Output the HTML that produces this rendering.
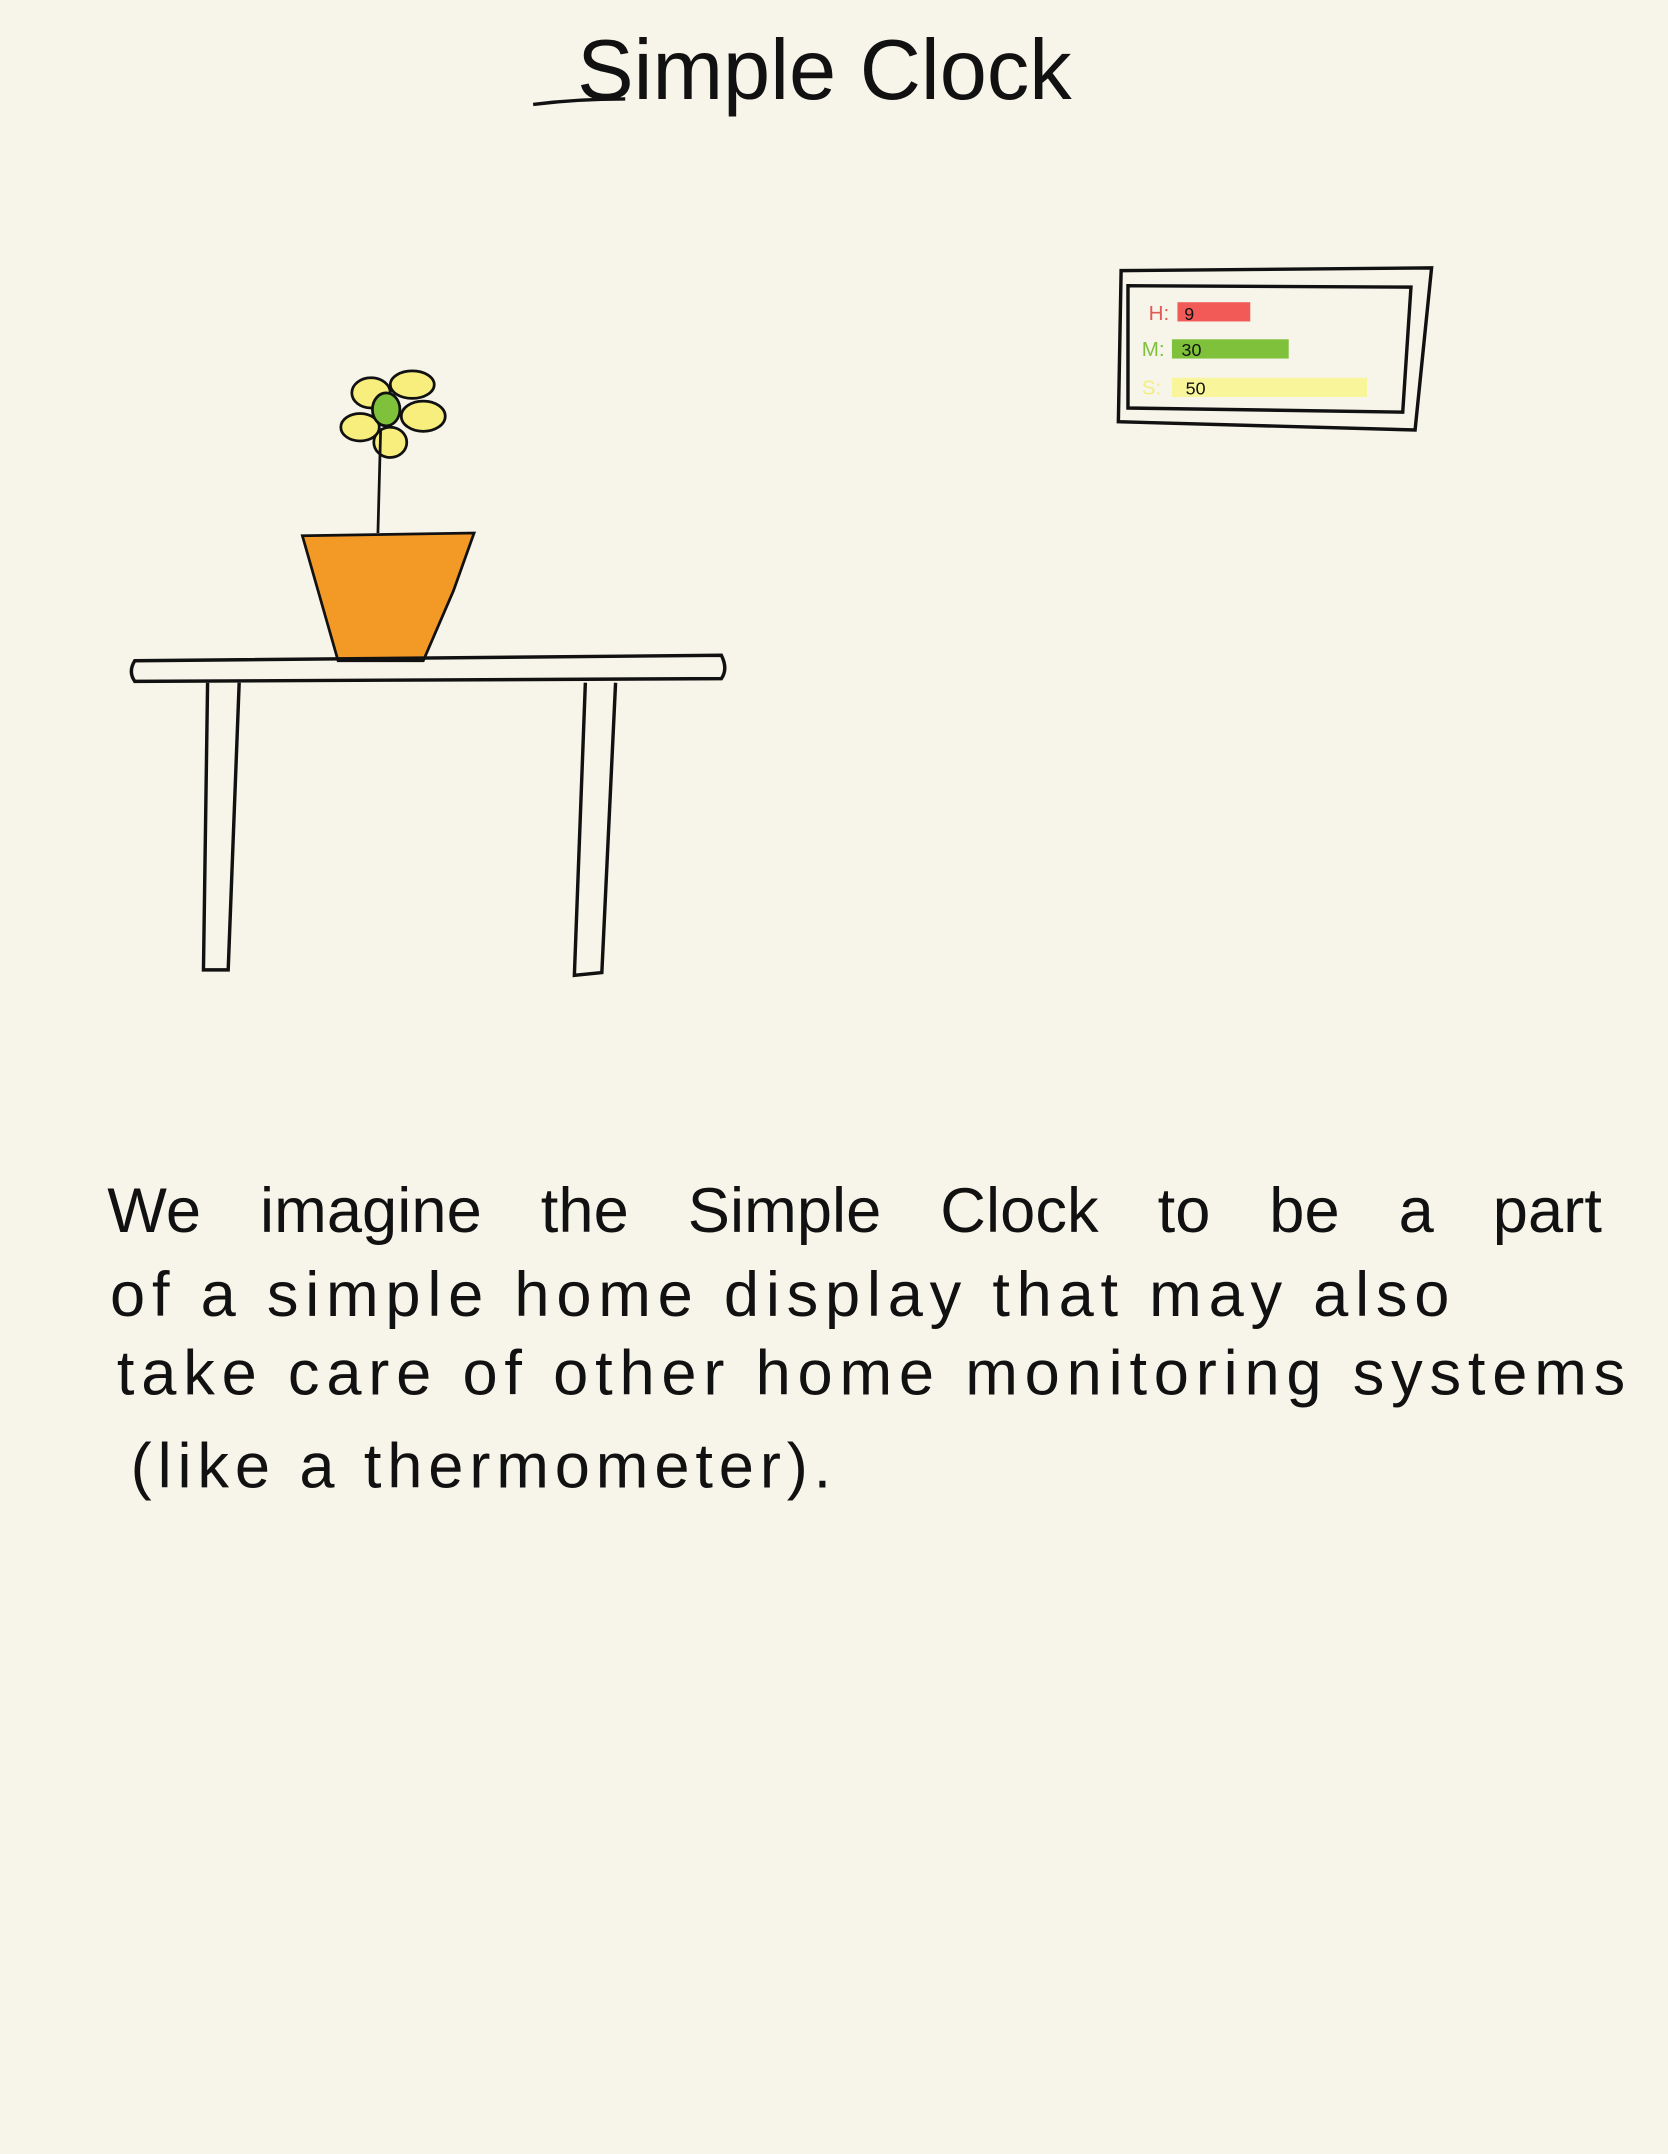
<!DOCTYPE html>
<html><head><meta charset="utf-8"><style>
html,body{margin:0;padding:0;background:#f7f5e9;}
svg{display:block;}
text{font-family:"Liberation Sans",sans-serif;fill:#111;}
</style></head><body>
<svg width="1668" height="2154" viewBox="0 0 1214 1568" xmlns="http://www.w3.org/2000/svg">
<rect width="1214" height="1568" fill="#f7f5e9"/>
<!-- title -->
<text x="420" y="72" font-size="62" font-weight="300" textLength="360" lengthAdjust="spacingAndGlyphs">Simple Clock</text>
<path d="M388 76 Q420 72 455 72" stroke="#111" stroke-width="2.5" fill="none"/>
<!-- clock -->
<path d="M816 197 L1042 195 L1030 313 L814 307 Z" fill="none" stroke="#111" stroke-width="2.5"/>
<path d="M821 208 L1027 209 L1021 300 L821 297 Z" fill="none" stroke="#111" stroke-width="2.5"/>
<rect x="857" y="220" width="53" height="14" fill="#f25a58"/>
<rect x="853" y="247" width="85" height="14" fill="#7fc13b"/>
<rect x="853" y="275" width="142" height="14" fill="#f9f59a"/>
<text x="836" y="233" font-size="15" style="fill:#e05a58">H:</text>
<text x="862" y="233" font-size="13">9</text>
<text x="831" y="259" font-size="15" style="fill:#7fc13b">M:</text>
<text x="860" y="259" font-size="13">30</text>
<text x="831" y="287" font-size="15" style="fill:#f2ee80">S:</text>
<text x="863" y="287" font-size="13">50</text>
<!-- flower -->
<g stroke="#111" stroke-width="2" fill="#f8ee7e">
<ellipse cx="270" cy="286" rx="14" ry="11"/>
<ellipse cx="300" cy="280" rx="16" ry="10"/>
<ellipse cx="308" cy="303" rx="16" ry="11"/>
<ellipse cx="284" cy="322" rx="12" ry="11"/>
<ellipse cx="262" cy="311" rx="14" ry="10"/>
<ellipse cx="281" cy="298" rx="10" ry="12" fill="#7fc13b"/>
</g>
<path d="M277 312 L275 388" stroke="#111" stroke-width="2" fill="none"/>
<!-- pot -->
<path d="M220 390 L345 388 L330 430 L308 481 L246 481 Z" fill="#f39a26" stroke="#111" stroke-width="2"/>
<!-- table -->
<path d="M98 481 L525 477 Q530 487 525 494 L98 496 Q93 489 98 481 Z" fill="none" stroke="#111" stroke-width="2.5"/>
<path d="M151 497 L148 706 L166 706 L174 497" fill="none" stroke="#111" stroke-width="2.5"/>
<path d="M426 497 L418 710 L438 708 L448 497" fill="none" stroke="#111" stroke-width="2.5"/>
<!-- paragraph -->
<g font-size="46" font-weight="300">
<text x="78" y="897" textLength="1088" lengthAdjust="spacing" word-spacing="30">We imagine the Simple Clock to be a part</text>
<text x="80" y="958" textLength="975" lengthAdjust="spacing">of a simple home display that may also</text>
<text x="85" y="1015" textLength="1098" lengthAdjust="spacing">take care of other home monitoring systems</text>
<text x="95" y="1083" textLength="510" lengthAdjust="spacing">(like a thermometer).</text>
</g>
</svg>
</body></html>
